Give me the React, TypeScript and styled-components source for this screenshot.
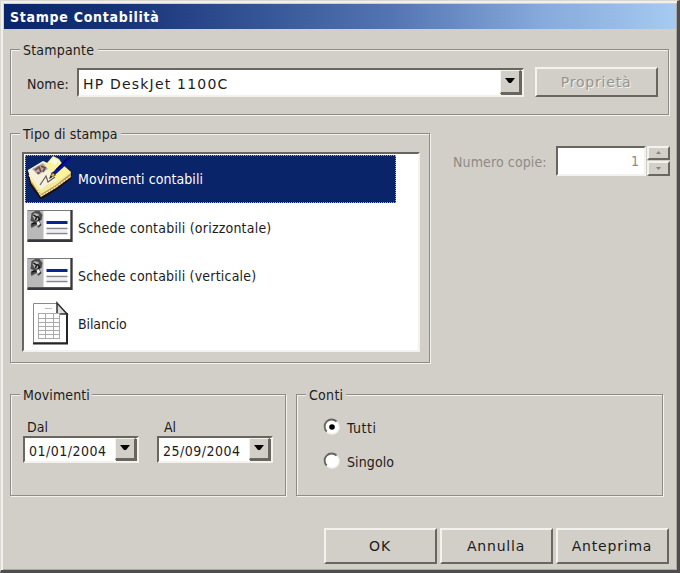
import React from "react";
import styled, { createGlobalStyle, css } from "styled-components";

const face = "#d2cfc8";
const line = "#8e8c88";
const light = "#f3f2ee";
const dark = "#68665f";

const Global = createGlobalStyle`
  * { box-sizing: border-box; }
  body { margin: 0; overflow: hidden; background: ${face}; }
`;

const Dialog = styled.main`
  width: 680px;
  height: 573px;
  padding: 1px 0 0 1px;
  background: ${face};
  border: solid;
  border-width: 1px 3px 3px 1px;
  border-color: #dad7d0 #4e4e4e #4e4e4e #dad7d0;
  box-shadow: inset 2px 2px 0 #f1f0ec, inset -1px -1px 0 #aaa8a2;
  font: 14px/18px "DejaVu Sans Condensed", "DejaVu Sans", sans-serif;
  color: #1c1c1c;
`;

const TitleBar = styled.header`
  width: 672px;
  height: 25px;
  margin: 2px 0 0 2px;
  padding: 1px 0 0 6px;
  background: linear-gradient(90deg, #0a246a 0%, #173478 18%, #5475b3 58%, #86aadb 80%, #a6caf0 100%);
  color: #fff;
  font-weight: bold;
  line-height: 25px;
`;

const Label = styled.span<{ $spacing?: number; $muted?: boolean }>`
  white-space: nowrap;
  letter-spacing: ${(p) => p.$spacing ?? 0}px;
  ${(p) => p.$muted && css`color: #8d8b87;`}
`;

const Group = styled.fieldset<{ $w: number; $h: number }>`
  width: ${(p) => p.$w}px;
  height: ${(p) => p.$h}px;
  min-width: 0;
  margin: 0;
  padding: 0;
  border: 1px solid ${line};
  box-shadow: 1px 1px 0 ${light}, inset 1px 1px 0 ${light};
`;

const Legend = styled.legend<{ $w: number; $spacing?: number }>`
  width: ${(p) => p.$w}px;
  height: 18px;
  margin-left: 9px;
  padding: 0 0 0 3px;
  line-height: 20px;
  background: ${face};
  white-space: nowrap;
  letter-spacing: ${(p) => p.$spacing ?? 0}px;
`;

const Body = styled.div`
  padding: 11px 0 0 8px;
`;

const PrinterRow = styled.div`
  display: flex;
  align-items: center;
  padding: 9px 0 0 16px;
`;

const NameLabel = styled.div`
  width: 50px;
  padding-top: 3px;
`;

const Sunken = styled.div<{ $w: number; $h: number }>`
  display: flex;
  width: ${(p) => p.$w}px;
  height: ${(p) => p.$h}px;
  border: 2px solid;
  border-color: ${dark} ${light} ${light} ${dark};
  background: #fff;
`;

const Value = styled.div<{ $pad?: number; $verdana?: boolean; $spacing?: number; $right?: boolean }>`
  flex: 1;
  min-width: 0;
  display: flex;
  align-items: center;
  justify-content: ${(p) => (p.$right ? "flex-end" : "flex-start")};
  padding: ${(p) => (p.$right ? 0 : 3)}px ${(p) => (p.$right ? p.$pad : 0)}px 0 ${(p) => (p.$right ? 0 : p.$pad ?? 4)}px;
  white-space: nowrap;
  letter-spacing: ${(p) => p.$spacing ?? 0}px;
  ${(p) => p.$verdana && css`font-family: "DejaVu Sans", sans-serif;`}
  ${(p) => p.$right && css`color: #8d8b87;`}
`;

const Raised = styled.button<{ $w: number; $h: number; $spacing?: number }>`
  display: flex;
  align-items: center;
  justify-content: center;
  width: ${(p) => p.$w}px;
  height: ${(p) => p.$h}px;
  padding: 0 1px 1px 0;
  border: 2px solid;
  border-color: ${light} ${dark} ${dark} ${light};
  background: ${face};
  color: #1c1c1c;
  font: 14px/18px "DejaVu Sans", sans-serif;
  white-space: nowrap;
  letter-spacing: ${(p) => p.$spacing ?? 0}px;
  &:disabled { color: #969490; text-shadow: 1px 1px 0 #f3f1eb; }
`;

const PropertiesButton = styled(Raised)`
  margin-left: 11px;
`;

const DropButton = styled(Raised)`
  align-self: stretch;
  height: auto;
  box-shadow: 1px 1px 0 ${dark};
  margin: 0 1px 1px 0;
  border-width: 1px 2px 2px 1px;
`;

const MiddleRow = styled.div`
  display: flex;
  margin-top: 9px;
`;

const List = styled.ul`
  list-style: none;
  width: 398px;
  height: 200px;
  margin: 10px 0 0 11px;
  padding: 1px;
  border: 2px solid;
  border-color: ${dark} ${light} ${light} ${dark};
  background: #fff;
`;

const Item = styled.li<{ $selected?: boolean }>`
  display: flex;
  align-items: center;
  width: 371px;
  height: 48.4px;
  padding-left: 1px;
  ${(p) => p.$selected && css`
    background: #0a246a;
    color: #fff;
    outline: 1px dotted #b9a877;
    outline-offset: -1px;
  `}
`;

const IconCell = styled.span`
  display: flex;
  width: 52px;
  height: 48px;
`;

const Copies = styled.div`
  display: flex;
  align-items: flex-start;
  padding: 22px 0 0 23px;
`;

const CopiesLabel = styled.div`
  width: 103px;
  padding-top: 7px;
`;

const Spinner = styled.div`
  display: grid;
  gap: 1px;
  margin-left: 1px;
`;

const BottomRow = styled.div`
  display: flex;
  gap: 10px;
  margin-top: 22px;
`;

const Dates = styled.div`
  display: flex;
  gap: 18px;
  padding: 15px 0 0 12px;
`;

const DateField = styled.div<{ $indent: number }>`
  display: grid;
  span { padding-left: ${(p) => p.$indent}px; }
`;

const Radios = styled.div`
  display: grid;
  gap: 16px;
  padding: 15px 0 0 26px;
`;

const RadioRow = styled.label`
  display: flex;
  align-items: center;
  gap: 6px;
  height: 18px;
  span { padding-top: 2px; }
`;

const Actions = styled.footer`
  display: flex;
  justify-content: flex-end;
  gap: 3px;
  padding: 32px 8px 0 0;
`;

const Arrow = ({ small, up }: { small?: boolean; up?: boolean }) =>
  small ? (
    <svg width="7" height="5" viewBox="0 0 7 5">
      <path d={up ? "M1 4L3.5 1L6 4Z" : "M1 1L3.5 4L6 1Z"} fill="#85837d" />
    </svg>
  ) : (
    <svg width="10" height="6" viewBox="0 0 10 6">
      <path d="M0 0H10L6 5H4Z" fill="#050508" />
    </svg>
  );

const LedgerIcon = () => (
  <svg width="48" height="48" viewBox="0 0 48 48">
    <path d="M1 17L4 30L14 44L18 43L32 34L46 23V18L42 14L36 28Z" fill="#1d0d14" />
    <path d="M2 15L5 28L15 42L30 33L45 22V17L30 12Z" fill="#b79b52" />
    <path d="M2 15L5 26L15 39L30 30L45 18L28 14Z" fill="#f3e99a" />
    <path d="M3 20L15 41L30 32L45 21" fill="none" stroke="#fff5b8" strokeWidth="1.2" strokeDasharray="2 1" />
    <path d="M2 15L17 6L21 8L32 26L22 29L15 35L5 22Z" fill="#f5f1dc" />
    <path d="M17 6L21 8L27 1L33 4L37 10L45 17L34 24L31 26Z" fill="#fbf49b" />
    <path d="M24 7L28 3L33 6L29 10Z" fill="#fffce0" />
    <path d="M6 14L17 8L22 14L12 20Z" fill="#b5a79f" />
    <path d="M9 15L13 12L15 17M15 11L19 13L17 17M11 18L14 18" fill="none" stroke="#6e4a4d" strokeWidth="1.7" />
    <path d="M14 30L20 21L22 27L29 22" fill="none" stroke="#625c52" strokeWidth="1.2" />
    <path d="M26 18L40 4L45 2V5L41 9L30 19L25 22Z" fill="#0713a8" />
    <path d="M30 15L41 4L45 2" fill="none" stroke="#05053f" strokeWidth="1.2" />
    <path d="M23 24L26 17L30 20Z" fill="#181018" />
    <path d="M25 20L27 18L29 20L26 22Z" fill="#d7b52e" />
  </svg>
);

const CardIcon = () => (
  <svg width="48" height="48" viewBox="-0.5 2 48 48">
    <rect x="1" y="8" width="45" height="32" fill="#77777a" />
    <rect x="2" y="9" width="42" height="28" fill="#fff" />
    <rect x="2" y="9" width="15" height="28" fill="#b9b9b9" />
    <path d="M1 37.5H44V8H46V40H1Z" fill="#38363c" />
    <path d="M4 19L5 11L9 9H13L16 13L15 18L13 19L15 23L12 26L10 23L5 26L4 23L7 20Z" fill="#4d4d4d" />
    <path d="M6 14L8 11L12 12L13 16L11 19L8 18Z" fill="#b6b6b6" />
    <path d="M7 13L10 15L9 18M11 14L13 17L10 21L14 23M5 22L9 21" stroke="#151515" strokeWidth="1.5" fill="none" />
    <path d="M10 20L12 19L14 22L11 24Z" fill="#eee" />
    <rect x="20" y="19" width="21" height="3" fill="#06239a" />
    <path d="M20 26.5H41M20 31.5H41" stroke="#85858c" strokeWidth="1.6" />
    <path d="M20 29H41" stroke="#dddde0" />
  </svg>
);

const SheetIcon = () => (
  <svg width="48" height="48" viewBox="-1 0 48 48">
    <path d="M6.5 3.5H30L39.5 13V42.5H6.5Z" fill="#fff" stroke="#89898d" />
    <path d="M6 43.5H40V13" fill="none" stroke="#252526" strokeWidth="2" />
    <path d="M30 3L40 14H30Z" fill="#ddd" stroke="#303033" strokeWidth="1.5" />
    <path d="M18 8.5H25" stroke="#bbb" />
    <rect x="11.5" y="13.5" width="21" height="25" fill="#fff" stroke="#aaa" />
    <path d="M12 18.5H33M12 22.5H33M12 26.5H33M12 30.5H33M12 34.5H33M18.5 13V38M26.5 13V38" stroke="#aaa" />
  </svg>
);

const Radio = ({ on }: { on?: boolean }) => (
  <svg width="18" height="18" viewBox="0 0 18 18">
    <circle cx="9" cy="9" r="7" fill="#fff" />
    <path d="M3.7 13.5A7 7 0 0 1 13.5 3.5" fill="none" stroke="#66645f" strokeWidth="1.8" />
    <path d="M14 4A7 7 0 0 1 4 14" fill="none" stroke="#f1f0eb" strokeWidth="1.5" />
    {on && <circle cx="9" cy="9" r="2.8" fill="#000" />}
  </svg>
);

const prints = [
  { name: "Movimenti contabili", icon: <LedgerIcon />, spacing: 0.07 },
  { name: "Schede contabili (orizzontale)", icon: <CardIcon />, spacing: 0.21 },
  { name: "Schede contabili (verticale)", icon: <CardIcon />, spacing: 0.2 },
  { name: "Bilancio", icon: <SheetIcon />, spacing: -0.1 },
];

const dates = [
  { name: "Dal", value: "01/01/2004", w: 116, indent: 4 },
  { name: "Al", value: "25/09/2004", w: 116, indent: 7 },
];

export default function App() {
  return (
    <Dialog>
      <Global />
      <TitleBar><Label $spacing={0.72}>Stampe Contabilità</Label></TitleBar>
      <Body>
        <Group $w={659} $h={75}>
          <Legend $w={78} $spacing={0.2}>Stampante</Legend>
          <PrinterRow>
            <NameLabel><Label $spacing={0.1}>Nome:</Label></NameLabel>
            <Sunken $w={447} $h={29}>
              <Value $pad={4} $verdana $spacing={1.2}>HP DeskJet 1100C</Value>
              <DropButton $w={21} $h={24} aria-label="Nome"><Arrow /></DropButton>
            </Sunken>
            <PropertiesButton $w={123} $h={30} $spacing={0.8} disabled>Proprietà</PropertiesButton>
          </PrinterRow>
        </Group>
        <MiddleRow>
          <Group $w={420} $h={239}>
            <Legend $w={101} $spacing={0.1}>Tipo di stampa</Legend>
            <List>
              {prints.map((p, i) => (
                <Item key={p.name} $selected={i === 0}>
                  <IconCell>{p.icon}</IconCell>
                  <Label $spacing={p.spacing}>{p.name}</Label>
                </Item>
              ))}
            </List>
          </Group>
          <Copies>
            <CopiesLabel><Label $muted $spacing={0.12}>Numero copie:</Label></CopiesLabel>
            <Sunken $w={90} $h={30}><Value $pad={5} $right>1</Value></Sunken>
            <Spinner>
              <Raised $w={23} $h={14} disabled aria-label="+"><Arrow small up /></Raised>
              <Raised $w={23} $h={15} disabled aria-label="-"><Arrow small /></Raised>
            </Spinner>
          </Copies>
        </MiddleRow>
        <BottomRow>
          <Group $w={276} $h={111}>
            <Legend $w={72} $spacing={0.1}>Movimenti</Legend>
            <Dates>
              {dates.map((d) => (
                <DateField key={d.name} $indent={d.indent}>
                  <Label>{d.name}</Label>
                  <Sunken $w={d.w} $h={27}>
                    <Value $pad={4} $spacing={0.5}>{d.value}</Value>
                    <DropButton $w={21} $h={22} aria-label={d.name}><Arrow /></DropButton>
                  </Sunken>
                </DateField>
              ))}
            </Dates>
          </Group>
          <Group $w={367} $h={111}>
            <Legend $w={40} $spacing={0.3}>Conti</Legend>
            <Radios>
              <RadioRow><Radio on /><Label $spacing={0.5}>Tutti</Label></RadioRow>
              <RadioRow><Radio /><Label $spacing={0.1}>Singolo</Label></RadioRow>
            </Radios>
          </Group>
        </BottomRow>
        <Actions>
          <Raised $w={113} $h={36} $spacing={0.8}>OK</Raised>
          <Raised $w={113} $h={36} $spacing={0.8}>Annulla</Raised>
          <Raised $w={113} $h={36} $spacing={0.8}>Anteprima</Raised>
        </Actions>
      </Body>
    </Dialog>
  );
}
